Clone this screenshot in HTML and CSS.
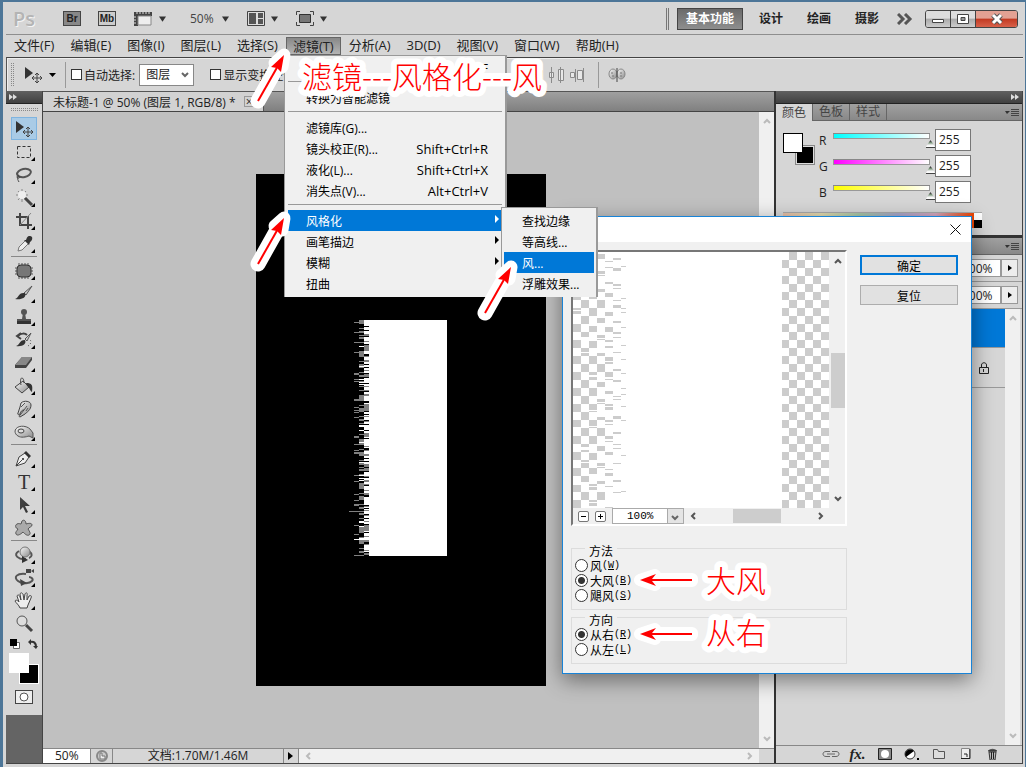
FILE: index.html
```html
<!DOCTYPE html>
<html lang="zh-CN">
<head>
    <meta charset="UTF-8">
    <meta name="viewport" content="width=device-width, initial-scale=1.0">
    <title>Photoshop</title>
    <link rel="stylesheet" href="styles.css">
</head>
<body>
    <svg class="defs" width="0" height="0">
        <defs>
            <linearGradient id="metal" x1="0" y1="0" x2="1" y2="1">
                <stop offset="0" stop-color="#fafafa"/>
                <stop offset="1" stop-color="#8a8a8a"/>
            </linearGradient>
            <linearGradient id="dark" x1="0" y1="0" x2="1" y2="1">
                <stop offset="0" stop-color="#444"/>
                <stop offset="1" stop-color="#333"/>
            </linearGradient>
            <pattern id="checker" width="16" height="16" patternUnits="userSpaceOnUse">
                <path fill="#fff" d="M0 0h16v16H0z"/>
                <path fill="#ccc" d="M8 0h8v8H8zM0 8h8v8H0z"/>
            </pattern>
        </defs>
        <symbol id="down" viewBox="0 0 8 6"><path d="M0 0h8L4 6z"/></symbol>
        <symbol id="chev-up" viewBox="0 0 8 6"><path d="M1 5l3-3 3 3" fill="none" stroke="currentColor" stroke-width="2"/></symbol>
        <symbol id="chev-down" viewBox="0 0 8 6"><path d="M1 1l3 3 3-3" fill="none" stroke="currentColor" stroke-width="2"/></symbol>
        <symbol id="chev-left" viewBox="0 0 6 8"><path d="M5 1L2 4l3 3" fill="none" stroke="currentColor" stroke-width="2"/></symbol>
        <symbol id="chev-right" viewBox="0 0 6 8"><path d="M1 1l3 3-3 3" fill="none" stroke="currentColor" stroke-width="2"/></symbol>
        <symbol id="collapse" viewBox="0 0 8 6"><path d="M0 0l4 3-4 3zM4 0l4 3-4 3z" fill="#ddd"/></symbol>
        <symbol id="panel-menu" viewBox="0 0 14 9"><path d="M0 3h5L2 6z" fill="#333"/><path d="M6 1h8M6 3h8M6 5h8M6 7h8" stroke="#444" transform="translate(0 .5)"/></symbol>
        <symbol id="move" viewBox="0 0 20 18"><path d="M2 1v12l8-6z" fill="#333"/><path d="M14 7v10M9 12h10M12 9l2-2 2 2M12 15l2 2 2-2M11 10l-2 2 2 2M17 10l2 2-2 2" fill="none" stroke="#444"/></symbol>
        <symbol id="arrow-diag" viewBox="0 0 44 64" overflow="visible">
            <g fill="none" stroke="#fff" stroke-width="15" stroke-linejoin="round" stroke-linecap="round">
                <path d="M9 55L32 14"/><path d="M35 9l-2 12-7-4z" fill="#fff" stroke-width="13"/>
            </g>
            <path d="M9 55L30 18" stroke="red" stroke-width="2"/>
            <path d="M35 9l-3 17-4-4-6-1z" fill="red"/>
        </symbol>
        <symbol id="arrow-left" viewBox="0 0 66 28">
            <path d="M6 14l15-5-2 4h39v2H19l2 4z" fill="#fff" stroke="#fff" stroke-width="12" stroke-linejoin="round"/>
            <path d="M6 14l16-6-4 5h40v2H18l4 5z" fill="red"/>
        </symbol>
    </svg>

    <div class="window">
        <header class="app-bar">
            <span class="logo">Ps</span>
            <button class="app-badge bridge">Br</button>
            <button class="app-badge mini">Mb</button>
            <button class="app-tool">
                <svg width="20" height="16" viewBox="0 0 20 16"><path d="M1 1h18v4H5v10H1z" fill="#444"/><path d="M5 5h13v9H5z" fill="#eee" stroke="#888"/><path d="M4 1v2M7 1v2M10 1v2M13 1v2M16 1v2M1 6h2M1 9h2M1 12h2" stroke="#ddd"/></svg>
                <svg class="caret" width="7" height="6"><use href="#down"/></svg>
            </button>
            <button class="app-tool zoom">50%<svg class="caret" width="7" height="6"><use href="#down"/></svg></button>
            <button class="app-tool">
                <svg width="18" height="15" viewBox="0 0 18 15"><path d="M.5.5h17v14H.5z" fill="#ddd" stroke="#444"/><path d="M2 2h7v11H2zM11 2h5v5h-5zM11 8h5v5h-5z" fill="#555"/></svg>
                <svg class="caret" width="7" height="6"><use href="#down"/></svg>
            </button>
            <button class="app-tool">
                <svg width="18" height="15" viewBox="0 0 18 15"><path d="M.5 4V.5H4M14 .5h3.500V4M17.500 11v3.500H14M4 14.500H.5V11" fill="none" stroke="#444"/><path d="M3.500 3.500h11v8h-11z" fill="#777" stroke="#333"/></svg>
                <svg class="caret" width="7" height="6"><use href="#down"/></svg>
            </button>
            <div class="workspaces">
                <button class="workspace active">基本功能</button>
                <button class="workspace">设计</button>
                <button class="workspace">绘画</button>
                <button class="workspace">摄影</button>
                <svg width="16" height="12" viewBox="0 0 16 12"><path d="M1 1l5 5-5 5M8 1l5 5-5 5" fill="none" stroke="#555" stroke-width="3"/></svg>
            </div>
            <div class="window-buttons">
                <button aria-label="最小化"><svg width="12" height="10" viewBox="0 0 12 10"><path d="M.5 5.500h11v3H.5z" fill="#fff" stroke="#444"/></svg></button>
                <button aria-label="还原"><svg width="12" height="10" viewBox="0 0 12 10"><path d="M.5.5h11v9H.5z" fill="#fff" stroke="#444"/><path d="M4 3.500h4v3H4z" fill="#999" stroke="#444"/></svg></button>
                <button class="close" aria-label="关闭"><svg width="14" height="12" viewBox="0 0 14 12"><path d="M3 2l8 8M11 2l-8 8" stroke="#555" stroke-width="5"/><path d="M3 2l8 8M11 2l-8 8" stroke="#fff" stroke-width="3"/></svg></button>
            </div>
        </header>

        <nav class="menu-bar">
            <button>文件(F)</button>
            <button>编辑(E)</button>
            <button>图像(I)</button>
            <button>图层(L)</button>
            <button>选择(S)</button>
            <button class="open">滤镜(T)</button>
            <button>分析(A)</button>
            <button>3D(D)</button>
            <button>视图(V)</button>
            <button>窗口(W)</button>
            <button>帮助(H)</button>
        </nav>

        <div class="options-bar">
            <span class="grip-v"></span>
            <svg class="move-icon" width="20" height="18"><use href="#move"/></svg>
            <svg width="7" height="4" viewBox="0 0 8 6" preserveAspectRatio="none"><path d="M0 0h8L4 6z"/></svg>
            <span class="divider"></span>
            <label class="check"><input type="checkbox">自动选择:</label>
            <span class="select-wrap">
                <select aria-label="自动选择"><option>图层</option></select>
                <svg width="8" height="6"><use href="#chev-down"/></svg>
            </span>
            <label class="check transform"><input type="checkbox">显示变换控件</label>
            <div class="align-icons">
                <svg width="16" height="16" viewBox="0 0 16 16" fill="#e8e8e8" stroke="#8a8a8a"><path d="M3.500 5.500h3v5h-3zM10.500 3.500h3v9h-3zM7.500 0v16"/></svg>
                <svg width="16" height="16" viewBox="0 0 16 16" fill="#e8e8e8" stroke="#8a8a8a"><path d="M2.500 0v16M11.500 0v16M.5 5.500h4v5h-4zM9.500 2.500h5v11h-5z"/></svg>
                <svg width="16" height="16" viewBox="0 0 16 16" fill="#e8e8e8" stroke="#8a8a8a"><path d="M1.500 5.500h4v5h-4zM6.500 2v13M8.500 3.500h5v9h-5zM14.500 1v14"/></svg>
                <span class="divider"></span>
                <svg width="18" height="16" viewBox="0 0 18 16"><ellipse cx="5" cy="7" rx="4" ry="5" fill="url(#metal)" stroke="#888"/><ellipse cx="13" cy="7" rx="4" ry="5" fill="url(#metal)" stroke="#888"/><path d="M3 6h2M4 9h2M12 6h2M12 9h2" stroke="#777"/><path d="M9 1v14" stroke="#444"/></svg>
            </div>
        </div>

        <main class="workspace-area">
            <aside class="toolbox">
                <div class="dock-head"><svg width="8" height="6"><use href="#collapse"/></svg></div>
                <div class="grip-h"></div>
                <div class="tools">
                    <button class="tool selected" aria-label="移动"><svg viewBox="0 0 20 18"><use href="#move"/></svg></button>
                    <button class="tool more" aria-label="选框"><svg viewBox="0 0 20 18"><path d="M3.500 3.500h13v11h-13z" fill="none" stroke="#333" stroke-dasharray="3 2"/></svg></button>
                    <button class="tool more" aria-label="套索"><svg viewBox="0 0 20 18"><ellipse cx="10" cy="7" rx="7" ry="4" transform="rotate(-12 10 7)" fill="none" stroke="#555" stroke-width="2"/><path d="M5 9c-3 1-2 4 0 3s0-3-1-1 0 3 1 5" fill="none" stroke="#444"/></svg></button>
                    <button class="tool more" aria-label="魔棒"><svg viewBox="0 0 20 18"><path d="M8 0v13M2 6h12M4 2l8 9M12 2l-8 9" stroke="#888"/><circle cx="8" cy="6" r="4" fill="#eee"/><path d="M11 9l7 7" stroke="#444" stroke-width="3"/></svg></button>
                    <button class="tool more" aria-label="裁剪"><svg viewBox="0 0 20 18"><path d="M6 1v12h12M2 5h12v12" fill="none" stroke="#444" stroke-width="2"/><path d="M6 13L17 1" stroke="#888"/></svg></button>
                    <button class="tool more" aria-label="吸管"><svg viewBox="0 0 20 18"><path d="M4 16l1-4 7-7 3 3-7 7z" fill="#eee" stroke="#777"/><path d="M10 5l5 5 1-3c3-2 3-6 0-6s-3 2-4 4z" fill="#333"/></svg></button>
                    <hr>
                    <button class="tool more" aria-label="修复"><svg viewBox="0 0 20 18"><path d="M5 1v16M8 1v16M11 1v16M14 1v16M1 6h18M1 9h18M1 12h18" stroke="#555"/><rect x="3" y="3" width="14" height="12" rx="4" fill="#777" stroke="#333"/></svg></button>
                    <button class="tool more" aria-label="画笔"><svg viewBox="0 0 20 18"><path d="M18 1l-8 7 2 2z" fill="#ccc" stroke="#555"/><path d="M11 8c2 5-4 7-10 6 4-1 3-7 10-6z" fill="#333"/></svg></button>
                    <button class="tool more" aria-label="图章"><svg viewBox="0 0 20 18"><circle cx="10" cy="4" r="3" fill="#555"/><path d="M9 5h2l1 6h5v4H3v-4h5z" fill="#555"/><path d="M3 13h14v3H3z" fill="#333"/></svg></button>
                    <button class="tool more" aria-label="历史画笔"><svg viewBox="0 0 20 18"><path d="M17 2l-6 6 2 2z" fill="#ccc" stroke="#555"/><path d="M11 9c2 4-3 7-9 6 4-1 3-6 9-6z" fill="#333"/><path d="M4 5c3-3 7-3 9-1M7 2L3 5l4 3" fill="none" stroke="#444" stroke-width="2"/><path d="M14 15c3-2 4-5 2-6" fill="none" stroke="#555" stroke-dasharray="1 2"/></svg></button>
                    <button class="tool more" aria-label="橡皮擦"><svg viewBox="0 0 20 18"><path d="M8 3h10v3l-6 8H1v-3z" fill="#444"/><path d="M8 3h10l-6 8H1z" fill="#888"/></svg></button>
                    <button class="tool more" aria-label="油漆桶"><svg viewBox="0 0 20 18"><path d="M1 10l8-6 6 6-7 6z" fill="url(#metal)" stroke="#444"/><path d="M7 8c-2-9 3-9 3-2" fill="none" stroke="#444"/><path d="M12 6c6 0 7 2 6 9-2-1-2-4-5-6z" fill="#333"/></svg></button>
                    <button class="tool more" aria-label="涂抹"><svg viewBox="0 0 20 18"><path d="M7 3c3-3 10-2 10 2 0 5-4 7-6 9l-5 3c-1 0-1-1 0-2l4-5c-2 0-3 1-4 4-1 1-3 1-2-1l2-6z" fill="url(#metal)" stroke="#444"/><path d="M7 7l4-4M10 10l3-4M12 11l2-3" stroke="#555"/></svg></button>
                    <button class="tool more" aria-label="海绵"><svg viewBox="0 0 20 18"><path d="M1 8c1-6 11-6 15-2l3 4v5l-4-2c-3 1-8 2-11 0-2-1-3-3-3-5z" fill="url(#metal)" stroke="#555"/><ellipse cx="7" cy="8" rx="3" ry="2" fill="#ddd" stroke="#444"/></svg></button>
                    <hr>
                    <button class="tool more" aria-label="钢笔"><svg viewBox="0 0 20 18"><path d="M2 16L5 7l6-4 4 4-4 6z" fill="#eee" stroke="#444"/><path d="M2 16l6-6" stroke="#444"/><circle cx="9" cy="9" r="1" fill="#222"/><path d="M12 1l5 5-2 2-5-5z" fill="#333"/></svg></button>
                    <button class="tool more type" aria-label="文字">T</button>
                    <button class="tool more" aria-label="路径选择"><svg viewBox="0 0 20 18"><path d="M6 1v13l3-3 3 6 2-1-3-6h5z" fill="url(#dark)"/></svg></button>
                    <button class="tool more" aria-label="形状"><svg viewBox="0 0 20 18"><path d="M8 2c2-2 4 0 4 3 3-1 6-1 6 1s-3 2-4 4c2 3 3 5 1 6s-4-1-6-3c-3 3-6 4-7 2s1-3 2-5C1 9 1 6 3 5s3 0 4 0z" fill="#aaa" stroke="#555"/></svg></button>
                    <hr>
                    <button class="tool more" aria-label="3D 旋转"><svg viewBox="0 0 20 18"><path d="M5 5C-2 9 5 14 12 13M15 5c4 3 3 6 0 7" fill="none" stroke="#555" stroke-width="2"/><circle cx="11" cy="6" r="5" fill="url(#metal)" stroke="#777"/><path d="M8 10l6 4-6 3z" fill="#333"/></svg></button>
                    <button class="tool more" aria-label="3D 相机"><svg viewBox="0 0 20 18"><path d="M12 5C3 4-1 8 4 12s12 2 14 0-1-4-3-4" fill="none" stroke="#555" stroke-width="2"/><path d="M12 0h5v4h-5zM17 2l3-2v4zM6 10l7 4-6 3z" fill="#444"/></svg></button>
                    <button class="tool more" aria-label="抓手"><svg viewBox="0 0 20 18"><path d="M6 16c-1-3-4-5-5-7 1-2 3 0 4 1L3 4c1-2 2-1 3 1l1 3-1-6c1-2 2-1 3 0l1 6 1-6c1-2 3-1 2 1v5l2-4c2-1 3 0 2 2l-3 7-1 3z" fill="#eee" stroke="#444"/></svg></button>
                    <button class="tool" aria-label="缩放"><svg viewBox="0 0 20 18"><circle cx="8" cy="6" r="5" fill="#ddd" stroke="#555"/><path d="M12 10l6 6" stroke="#444" stroke-width="3"/></svg></button>
                </div>
                <div class="swatch-tools">
                    <svg width="10" height="10" viewBox="0 0 10 10"><path d="M3.500 3.500h6v6h-6z" fill="#fff" stroke="#666"/><path d="M0 0h7v7H0z"/></svg>
                    <svg width="10" height="10" viewBox="0 0 10 10"><path d="M2 3c4-1 6 1 6 5" fill="none" stroke="#333" stroke-width="2"/><path d="M3 0v6L0 3zM5 7h5l-2 3z" fill="#333"/></svg>
                </div>
                <div class="swatches"><span class="back"></span><span class="front"></span></div>
                <button class="quick-mask" aria-label="快速蒙版"><svg width="16" height="12" viewBox="0 0 16 12"><circle cx="8" cy="6" r="4" fill="#fff" stroke="#555"/></svg></button>
            </aside>

            <section class="document">
                <div class="doc-tabs">
                    <div class="doc-tab">未标题-1 @ 50% (图层 1, RGB/8) * <button aria-label="关闭文档">×</button></div>
                </div>
                <div class="doc-body">
                    <div class="canvas">
                        <svg class="artboard" width="290" height="512" viewBox="0 0 290 512">
                            <path d="M0 0h290v512H0z"/>
                            <path d="M113 146h78v236h-78z" fill="#fff"/>
                            <g stroke-width="5">
                                <path d="M110.500 146v236" stroke="#fff"/>
                                <path d="M110.500 146v236" stroke="#808080" stroke-dasharray="0 6 1 3 1 3 2 5 1 2 7 5 1 3 2 2 1 5 1 2 4 3"/>
                                <path d="M110.500 152v230" stroke="#000" stroke-dasharray="1 3 1 5 1 7 1 9 2 8 1 2 1 5"/>
                                <path d="M105.500 146v236" stroke="#808080" stroke-dasharray="4 4 1 2 2 2 1 1 2 3 1 3 1 4 6 4 1 2"/>
                                <path d="M105.500 172v205" stroke="#fff" stroke-dasharray="1 19 1 12 1 2 1 1 1 40 2 3 1 11"/>
                            </g>
                            <path fill="#808080" d="M98 148h5v1h-5zM98 158h5v1h-5zM98 168h5v1h-5zM98 178h5v1h-5zM98 199h5v2h-5zM98 205h5v1h-5zM98 207h5v1h-5zM98 225h5v2h-5zM98 233h5v1h-5zM98 236h5v1h-5zM98 238h5v1h-5zM98 243h5v1h-5zM98 262h5v2h-5zM98 270h5v1h-5zM98 276h5v1h-5zM98 278h5v2h-5zM98 301h5v1h-5zM98 307h5v1h-5zM98 320h5v1h-5zM98 326h5v1h-5zM98 330h5v2h-5zM93 337h10v1H93zM98 351h5v1h-5zM98 360h5v1h-5zM98 381h5v1h-5z"/>
                            <path fill="#fff" d="M98 365h10v1H98z"/>
                        </svg>
                    </div>
                    <div class="scroll-v">
                        <svg width="8" height="6"><use href="#chev-up"/></svg>
                        <svg width="8" height="6"><use href="#chev-down"/></svg>
                    </div>
                </div>
                <div class="status-bar">
                    <input class="zoom-field" aria-label="缩放" value="50%">
                    <span class="status-icon"><svg width="14" height="14" viewBox="0 0 14 14"><circle cx="7" cy="7" r="5" fill="#ccc" stroke="#888" stroke-width="2"/><path d="M5 4v6h5V7H7V4z" fill="#eee" stroke="#777"/></svg></span>
                    <span class="status-text">文档:1.70M/1.46M</span>
                    <span class="status-more"><svg width="5" height="8" viewBox="0 0 5 8"><path d="M0 0l5 4-5 4z"/></svg></span>
                    <div class="scroll-h">
                        <svg width="6" height="8"><use href="#chev-left"/></svg>
                        <svg width="6" height="8"><use href="#chev-right"/></svg>
                    </div>
                    <span class="corner"></span>
                </div>
            </section>

            <aside class="dock">
                <div class="dock-head right"><svg width="8" height="6"><use href="#collapse"/></svg></div>
                <div class="panel-tabs">
                    <button class="active">颜色</button>
                    <button>色板</button>
                    <button>样式</button>
                    <svg width="14" height="9"><use href="#panel-menu"/></svg>
                </div>
                <div class="color-panel">
                    <div class="color-swatches"><span class="back"></span><span class="front"></span></div>
                    <div class="channels">
                        <div class="channel">
                            <label for="red">R</label>
                            <input class="slider cyan" id="red" type="range" min="0" max="255" value="255">
                            <input class="value" aria-label="R" value="255">
                        </div>
                        <div class="channel">
                            <label for="green">G</label>
                            <input class="slider magenta" id="green" type="range" min="0" max="255" value="255">
                            <input class="value" aria-label="G" value="255">
                        </div>
                        <div class="channel">
                            <label for="blue">B</label>
                            <input class="slider yellow" id="blue" type="range" min="0" max="255" value="255">
                            <input class="value" aria-label="B" value="255">
                        </div>
                    </div>
                    <div class="spectrum"><span></span></div>
                </div>
                <div class="panel-tabs layers-tabs">
                    <svg width="14" height="9"><use href="#panel-menu"/></svg>
                </div>
                <div class="layer-option"><input aria-label="不透明度" value="100%"><button aria-label="不透明度滑块"><svg width="4" height="6" viewBox="0 0 4 6"><path d="M0 0l4 3-4 3z"/></svg></button></div>
                <div class="layer-option"><input aria-label="填充" value="100%"><button aria-label="填充滑块"><svg width="4" height="6" viewBox="0 0 4 6"><path d="M0 0l4 3-4 3z"/></svg></button></div>
                <div class="layers">
                    <div class="layer-list">
                        <div class="layer current"></div>
                        <div class="layer"><svg width="10" height="12" viewBox="0 0 10 12"><path d="M2.500 5V3c0-3 5-3 5 0v2M.5 5.500h9v6h-9z" fill="none" stroke="#222"/><path d="M4.500 7v3" stroke="#222"/></svg></div>
                    </div>
                    <div class="scroll-v">
                        <svg width="8" height="6"><use href="#chev-up"/></svg>
                        <svg width="8" height="6"><use href="#chev-down"/></svg>
                    </div>
                </div>
                <div class="layer-actions">
                    <button aria-label="链接图层"><svg width="18" height="8" viewBox="0 0 18 8"><path d="M8 1.500H4c-4 0-4 5 0 5h4M10 1.500h4c4 0 4 5 0 5h-4M5 4h8" fill="none" stroke="#666"/></svg></button>
                    <button class="fx" aria-label="图层样式">fx.</button>
                    <button aria-label="添加蒙版"><svg width="14" height="12" viewBox="0 0 14 12"><path d="M.5.5h13v11H.5z" fill="#888" stroke="#222"/><circle cx="7" cy="6" r="4" fill="#fff"/></svg></button>
                    <button aria-label="调整图层"><svg width="16" height="12" viewBox="0 0 16 12"><circle cx="6" cy="6" r="5" fill="#fff" stroke="#333"/><path d="M2 9c-3-5 3-10 8-6z"/><path d="M13 10h2v2h-2z"/></svg></button>
                    <button aria-label="新建组"><svg width="12" height="11" viewBox="0 0 12 11"><path d="M.5 1.500h4l1 2h6v7H.5z" fill="#ddd" stroke="#555"/></svg></button>
                    <button aria-label="新建图层"><svg width="11" height="11" viewBox="0 0 11 11"><path d="M1.500.5h8v10h-8z" fill="#eee" stroke="#888"/><path d="M10 1v9.500H1M4 6h3v3" fill="none" stroke="#222"/></svg></button>
                    <button aria-label="删除图层"><svg width="11" height="12" viewBox="0 0 11 12"><path d="M1 3c2-3 7-3 9 0z" fill="#555"/><path d="M2 4h7l-1 8H3z" fill="#bbb" stroke="#333"/><path d="M4.500 4v7M6.500 4v7M1 3h9" stroke="#222"/></svg></button>
                </div>
            </aside>
        </main>
    </div>

    <div class="dialog" role="dialog" aria-label="风">
        <div class="dialog-title"><button aria-label="关闭"><svg width="11" height="11" viewBox="0 0 11 11"><path d="M.5.5l10 10M10.500.5l-10 10" stroke="#111"/></svg></button></div>
        <div class="dialog-body">
            <div class="dialog-main">
                <div class="preview">
                    <svg width="256" height="256" viewBox="0 0 256 256">
                        <path d="M0 0h256v256H0z" fill="url(#checker)"/>
                        <path d="M53 0h156v256H53z" fill="#fff"/>
                        <g stroke="#fff">
                            <path d="M4 44v212" stroke-width="8" stroke-dasharray="0 14 1 3 2 16 1 34 1 45"/>
                            <path d="M12 40v216" stroke-width="8" stroke-dasharray="0 18 2 2 1 22 3 12 1 19 2 1 1 26"/>
                            <path d="M20 10v246" stroke-width="8" stroke-dasharray="3 9 1 3 2 14 1 4 2 21 4 8 1 3"/>
                            <path d="M28 0v256" stroke-width="8" stroke-dasharray="2 5 1 7 4 3 1 8 6 3 1 4 2 9 3 5"/>
                            <path d="M36 0v256" stroke-width="8" stroke-dasharray="4 3 2 1 5 4 1 3 7 5 2 1 3 4"/>
                            <path d="M44 0v256" stroke-width="8" stroke-dasharray="6 2 3 1 4 3 7 1 5 2 2 1"/>
                            <path d="M50.500 0v256" stroke-width="5" stroke-dasharray="14 1 5 1 11 1 13 1 9 1 3 1"/>
                        </g>
                    </svg>
                    <div class="scroll-v preview-scroll">
                        <svg width="8" height="6"><use href="#chev-up"/></svg>
                        <span class="thumb"></span>
                        <svg width="8" height="6"><use href="#chev-down"/></svg>
                    </div>
                    <div class="preview-bar">
                        <button class="zoom-btn" aria-label="缩小"><svg width="5" height="5"><path d="M0 2.500h5" stroke="#000"/></svg></button>
                        <button class="zoom-btn" aria-label="放大"><svg width="5" height="5"><path d="M0 2.500h5M2.500 0v5" stroke="#000"/></svg></button>
                        <span class="preview-zoom">
                            <select aria-label="预览比例"><option>100%</option></select>
                            <svg width="8" height="6"><use href="#chev-down"/></svg>
                        </span>
                        <div class="scroll-h preview-scroll">
                            <svg width="6" height="8"><use href="#chev-left"/></svg>
                            <span class="thumb"></span>
                            <svg width="6" height="8"><use href="#chev-right"/></svg>
                        </div>
                    </div>
                </div>
                <fieldset class="method">
                    <legend>方法</legend>
                    <label><input type="radio" name="method">风<span>(<u>W</u>)</span></label>
                    <label><input type="radio" name="method" checked>大风<span>(<u>B</u>)</span></label>
                    <label><input type="radio" name="method">飓风<span>(<u>S</u>)</span></label>
                </fieldset>
                <fieldset>
                    <legend>方向</legend>
                    <label><input type="radio" name="direction" checked>从右<span>(<u>R</u>)</span></label>
                    <label><input type="radio" name="direction">从左<span>(<u>L</u>)</span></label>
                </fieldset>
            </div>
            <div class="dialog-buttons">
                <button class="primary">确定</button>
                <button>复位</button>
            </div>
        </div>
    </div>

    <ul class="menu filter-menu">
        <li><kbd>Ctrl+F</kbd></li>
        <li class="line"></li>
        <li>转换为智能滤镜</li>
        <li class="line"></li>
        <li>滤镜库(G)...</li>
        <li>镜头校正(R)...<kbd>Shift+Ctrl+R</kbd></li>
        <li>液化(L)...<kbd>Shift+Ctrl+X</kbd></li>
        <li>消失点(V)...<kbd>Alt+Ctrl+V</kbd></li>
        <li class="line"></li>
        <li class="current sub">风格化</li>
        <li class="sub">画笔描边</li>
        <li class="sub">模糊</li>
        <li>扭曲</li>
    </ul>
    <ul class="menu stylize-menu">
        <li>查找边缘</li>
        <li>等高线...</li>
        <li class="current">风...</li>
        <li>浮雕效果...</li>
    </ul>

    <svg class="note note-path" width="244" height="36"><text x="0" y="29">滤镜---风格化---风</text></svg>
    <svg class="note note-method" width="60" height="36"><text x="0" y="29">大风</text></svg>
    <svg class="note note-direction" width="60" height="36"><text x="0" y="29">从右</text></svg>
    <svg class="note-arrow to-filter" width="44" height="64"><use href="#arrow-diag"/></svg>
    <svg class="note-arrow to-stylize" width="44" height="64"><use href="#arrow-diag"/></svg>
    <svg class="note-arrow to-wind" width="44" height="64"><use href="#arrow-diag"/></svg>
    <svg class="note-arrow to-method" width="66" height="28"><use href="#arrow-left"/></svg>
    <svg class="note-arrow to-direction" width="66" height="28"><use href="#arrow-left"/></svg>
</body>
</html>
```
FILE: styles.css
```css
* {
    box-sizing: border-box;
    margin: 0;
    padding: 0;
}

body {
    position: relative;
    height: 100vh;
    overflow: hidden;
    font-family: "Open Sans", "Noto Sans CJK SC", sans-serif;
    font-size: 12px;
    color: #222;
}

button, input, select {
    font: inherit;
    color: inherit;
    border: none;
    background: none;
    border-radius: 0;
    appearance: none;
    outline: none;
}

svg {
    display: block;
    flex: none;
}

.defs {
    position: absolute;
}

.window {
    height: 100vh;
    display: flex;
    flex-direction: column;
    background-color: #d6d6d6;
    border: solid #4d7698;
    border-width: 2px 1px 0 3px;
    padding: 1px 2px 3px 3px;
}

/* top bars */
.app-bar {
    display: flex;
    align-items: center;
    height: 32px;
    padding: 0 5px 0 7px;
    border-bottom: 1px solid #8e8e8e;
}

.logo {
    width: 50px;
    font-size: 20px;
    font-weight: 600;
    line-height: 28px;
    color: #b4b4b4;
    text-shadow: 1px 1px 0 #f4f4f4;
}

.app-badge {
    width: 18px;
    height: 15px;
    margin-right: 17px;
    font-family: "Liberation Sans", sans-serif;
    font-size: 10px;
    font-weight: bold;
    line-height: 13px;
    border: 1px solid #444;
}

.bridge {
    background-color: #888;
}

.mini {
    background-color: #ccc;
}

.app-tool {
    display: flex;
    align-items: center;
    margin-right: 18px;
}

.app-tool .caret {
    margin-left: 6px;
    fill: #333;
}

.zoom {
    margin-left: 6px;
    color: #444;
}

.zoom .caret {
    margin-left: 8px;
}

.workspaces {
    display: flex;
    align-items: center;
    margin-left: auto;
    padding-left: 8px;
    border-left: 3px double #777;
    height: 22px;
}

.workspace {
    height: 22px;
    margin-right: 12px;
    padding: 0 6px;
    font-weight: bold;
    line-height: 20px;
}

.workspace.active {
    width: 66px;
    margin-right: 10px;
    color: #fff;
    background: linear-gradient(#6a6a6a, #8e8e8e);
    border: 1px solid #444;
}

.window-buttons {
    display: flex;
    margin-left: 12px;
    border: 1px solid #444;
    border-radius: 3px;
    overflow: hidden;
}

.window-buttons button {
    display: flex;
    align-items: center;
    justify-content: center;
    width: 25px;
    height: 16px;
    background: linear-gradient(#ddd 45%, #aaa 50%, #ccc);
    border-right: 1px solid #444;
}

.window-buttons .close {
    width: 41px;
    border-right: none;
    background: linear-gradient(#e3a193 45%, #c23a22 50%, #d8614a);
}

.menu-bar {
    display: flex;
    height: 22px;
}

.menu-bar button {
    height: 20px;
    padding: 0 8px;
    font-size: 13px;
    line-height: 20px;
    white-space: nowrap;
}

.menu-bar .open {
    height: 18px;
    padding: 0 6px;
    margin-top: 2px;
    line-height: 14px;
    background: linear-gradient(#888, #b4b4b4);
    border: 1px solid #666;
}

.options-bar {
    display: flex;
    align-items: center;
    height: 34px;
    padding-left: 4px;
    border-top: 1px solid #444;
    border-left: 1px solid #555;
    box-shadow: inset 1px 1px 0 #eee;
}

/* dotted handles */
.grip-v, .grip-h {
    background:
        repeating-linear-gradient(to bottom, transparent 0 1px, #d6d6d6 1px 2px),
        repeating-linear-gradient(to right, #888 0 1px, #d6d6d6 1px 2px);
}

.grip-v {
    width: 4px;
    height: 24px;
    margin-right: 8px;
}

.grip-h {
    width: 27px;
    height: 4px;
    margin: 4px 0 5px;
}

.move-icon {
    margin-right: 6px;
}

.divider {
    width: 1px;
    height: 26px;
    margin: 0 5px 0 9px;
    background-color: #999;
}

.check {
    display: flex;
    align-items: center;
    gap: 2px;
    white-space: nowrap;
}

.check input {
    width: 11px;
    height: 11px;
    background-color: #fff;
    border: 1px solid #333;
}

.transform {
    margin-left: 16px;
}

.select-wrap {
    position: relative;
    margin-left: 4px;
}

.select-wrap select {
    width: 55px;
    height: 22px;
    padding-left: 6px;
    background-color: #fff;
    border: 1px solid #888;
}

.select-wrap svg {
    position: absolute;
    right: 5px;
    top: 8px;
    color: #666;
}

.align-icons {
    display: flex;
    align-items: center;
    gap: 4px;
    margin-left: 234px;
}

/* workspace */
.workspace-area {
    flex: 1;
    display: flex;
    min-height: 0;
    border: solid #444;
    border-width: 0 1px 1px 0;
}

.dock-head {
    display: flex;
    align-items: center;
    height: 13px;
    padding: 0 3px;
    background: linear-gradient(#606060, #404040);
    border-bottom: 1px solid #222;
}

.dock-head.right {
    justify-content: flex-end;
}

.toolbox {
    width: 37px;
    display: flex;
    flex-direction: column;
    align-items: center;
    background: linear-gradient(#d6d6d6 624px, #646464 624px);
    border-right: 1px solid #444;
}

.toolbox .dock-head {
    align-self: stretch;
}

.tool {
    position: relative;
    display: block;
    width: 26px;
    height: 23px;
}

.tool svg {
    width: 20px;
    height: 18px;
    margin: 0 auto;
}

.tool.selected {
    background-color: #a9cbe6;
    border: 1px solid #7fb4e0;
}

.tool.more::after {
    content: "";
    position: absolute;
    right: 2px;
    bottom: 2px;
    border: 2px solid;
    border-color: transparent #000 #000 transparent;
}

.tool.type {
    font-family: "Liberation Serif", serif;
    font-size: 20px;
    line-height: 20px;
    color: #333;
}

.tools hr {
    height: 4px;
    border: solid #d6d6d6;
    border-width: 1px 0 2px;
    background-color: #888;
}

.swatch-tools {
    display: flex;
    justify-content: space-between;
    width: 28px;
    margin: 4px 0;
}

.swatches {
    position: relative;
    width: 30px;
    height: 31px;
}

.swatches span {
    position: absolute;
    width: 20px;
    height: 20px;
    border: 1px solid #fff;
}

.front {
    left: 0;
    top: 0;
    background-color: #fff;
}

.back {
    right: 0;
    bottom: 0;
    background-color: #000;
}

.quick-mask {
    margin-top: 6px;
    background-color: #eee;
    border: 1px solid #444;
}

.document {
    flex: 1;
    display: flex;
    flex-direction: column;
    min-width: 0;
}

.doc-tabs {
    display: flex;
    height: 21px;
    background: linear-gradient(#a0a0a0, #808080);
    border-top: 1px solid #555;
    border-bottom: 1px solid #444;
}

.doc-tab {
    display: flex;
    align-items: center;
    gap: 8px;
    width: 221px;
    padding-left: 10px;
    background-color: #d2d2d2;
    border-right: 1px solid #555;
    white-space: nowrap;
}

.doc-tab button {
    width: 11px;
    height: 11px;
    line-height: 9px;
    border: 1px solid #999;
}

.doc-body {
    flex: 1;
    display: flex;
    min-height: 0;
}

.canvas {
    flex: 1;
    display: flex;
    align-items: center;
    justify-content: center;
    background-color: #c0c0c0;
}

.scroll-v {
    display: flex;
    flex-direction: column;
    align-items: center;
    justify-content: space-between;
    width: 15px;
    padding: 6px 0;
    background-color: #f0f0f0;
    color: #bbb;
}

.scroll-h {
    flex: 1;
    display: flex;
    align-items: center;
    justify-content: space-between;
    padding: 0 6px;
    background-color: #f0f0f0;
    color: #bbb;
}

.status-bar {
    display: flex;
    height: 15px;
    border-top: 1px solid #888;
    line-height: 14px;
}

.zoom-field {
    width: 48px;
    padding-left: 12px;
    background-color: #fff;
    border-right: 1px solid #888;
}

.status-icon {
    width: 22px;
    padding-left: 4px;
    border-right: 1px solid #888;
}

.status-text {
    width: 171px;
    text-align: center;
    border-right: 1px solid #888;
}

.status-more {
    width: 15px;
    padding: 3px 0 0 4px;
    border-right: 1px solid #888;
}

.corner {
    width: 15px;
}

/* right panels */
.dock {
    width: 248px;
    display: flex;
    flex-direction: column;
    border-left: 2px solid #333;
}

.panel-tabs {
    display: flex;
    height: 17px;
    background: linear-gradient(#a0a0a0, #888);
    border-bottom: 1px solid #666;
}

.panel-tabs button {
    width: 37px;
    line-height: 16px;
    color: #444;
    border-right: 1px solid #666;
}

.panel-tabs .active {
    height: 17px;
    background-color: #d6d6d6;
}

.panel-tabs svg {
    margin: 4px 3px 0 auto;
}

.color-panel {
    height: 114px;
    display: flex;
    flex-wrap: wrap;
    align-content: flex-start;
    padding: 8px 0 0 7px;
}

.color-swatches {
    position: relative;
    width: 32px;
    height: 32px;
    margin: 4px 4px 0 0;
}

.color-swatches span {
    position: absolute;
    width: 20px;
    height: 20px;
    border: 1px solid #000;
}

.color-swatches .back {
    border: 1px solid #888;
    outline: 1px solid #ddd;
    outline-offset: -2px;
}

.channel {
    display: flex;
    align-items: center;
    height: 22px;
    margin-bottom: 4px;
}

.channel label {
    width: 10px;
}

.value {
    width: 36px;
    height: 22px;
    padding: 0 3px 2px;
    background-color: #fff;
    border: 1px solid #777;
}

.slider {
    width: 106px;
    height: 16px;
    background-repeat: no-repeat;
    background-position: 4px 1px, 5px 2px, 4px 1px;
    background-size: 97px 1px, 95px 4px, 97px 6px;
}

.cyan {
    background-image: linear-gradient(#888, #888), linear-gradient(to right, #00ffff, #fff), linear-gradient(#999, #999);
}

.magenta {
    background-image: linear-gradient(#888, #888), linear-gradient(to right, #ff00ff, #fff), linear-gradient(#999, #999);
}

.yellow {
    background-image: linear-gradient(#888, #888), linear-gradient(to right, #ffff00, #fff), linear-gradient(#999, #999);
}

.slider::-webkit-slider-thumb {
    appearance: none;
    width: 9px;
    height: 8px;
    margin-top: 8px;
    background: linear-gradient(#4a4a4a 2px, #5a7a5a 2px, #f4f4f4 5px, #fff 7px, #444 7px);
    clip-path: polygon(50% 0, 100% 80%, 100% 100%, 0 100%, 0 80%);
}

.spectrum {
    width: 199px;
    height: 16px;
    margin-top: 5px;
    display: flex;
    justify-content: flex-end;
    background: linear-gradient(to right, #e8c0a8, #e4dcb0, #a8c8a8, #a8a8cc, #d8a8c0, #e40 96%);
    border-top: 1px solid #aaa;
}

.spectrum span {
    width: 8px;
    background: linear-gradient(#fff 50%, #000 50%);
}

.layers-tabs {
    height: 20px;
    border-top: 3px solid #333;
}

.layer-option {
    display: flex;
    justify-content: flex-end;
    align-items: center;
    height: 27px;
    padding-right: 4px;
    border-bottom: 1px solid #999;
}

.layer-option input {
    width: 40px;
    height: 18px;
    background-color: #fff;
    border: 1px solid #999;
}

.layer-option button {
    width: 17px;
    height: 18px;
    padding-left: 6px;
    background-color: #ededed;
    border: 1px solid #999;
}

.layers {
    flex: 1;
    display: flex;
}

.layer-list {
    flex: 1;
}

.layer {
    display: flex;
    align-items: center;
    justify-content: flex-end;
    height: 40px;
    padding-right: 16px;
    border-bottom: 1px solid #999;
}

.layer.current {
    height: 39px;
    background-color: #0078d7;
}

.layers .scroll-v {
    margin-right: 2px;
}

.layer-actions {
    display: flex;
    justify-content: flex-end;
    height: 18px;
    padding-right: 16px;
    border-top: 1px solid #888;
}

.layer-actions button {
    display: flex;
    align-items: center;
    justify-content: center;
    width: 27px;
    height: 15px;
}

.fx {
    font-family: "Liberation Serif", serif;
    font-size: 15px;
    font-style: italic;
    font-weight: bold;
    line-height: 14px;
}

/* wind dialog */
.dialog {
    position: absolute;
    left: 562px;
    top: 216px;
    width: 410px;
    height: 458px;
    background-color: #f0f0f0;
    border: 1px solid #1883d7;
    box-shadow: 0 6px 20px rgba(0, 0, 0, 0.45);
    font-family: "Noto Sans CJK SC", sans-serif;
    color: #000;
}

.dialog-title {
    display: flex;
    align-items: center;
    justify-content: flex-end;
    height: 25px;
    padding-right: 10px;
    background-color: #fff;
}

.dialog-body {
    display: flex;
    gap: 13px;
    padding: 8px;
}

.dialog-main {
    width: 276px;
}

.preview {
    display: grid;
    grid-template-columns: 257px 1fr;
    grid-template-rows: 256px 16px;
    height: 276px;
    border: 2px solid;
    border-color: #777 #fff #fff #777;
}

.preview .preview-scroll {
    color: #555;
}

.thumb {
    background-color: #cdcdcd;
}

.scroll-v .thumb {
    width: 14px;
    height: 55px;
}

.scroll-h .thumb {
    width: 48px;
    height: 14px;
}

.preview-bar {
    grid-column: 1 / 3;
    display: flex;
    align-items: center;
    padding: 0 15px 0 5px;
}

.zoom-btn {
    display: flex;
    align-items: center;
    justify-content: center;
    width: 11px;
    height: 11px;
    margin-right: 6px;
    background-color: #fff;
    border: 1px solid #777;
    border-radius: 2px;
}

.preview-zoom {
    position: relative;
    display: flex;
}

.preview-zoom select {
    width: 72px;
    height: 16px;
    padding-left: 14px;
    font-family: "Liberation Mono", monospace;
    font-size: 11px;
    background: linear-gradient(to right, #fff 54px, #aaa 54px, #aaa 55px, #e4e4e4 55px);
    border: 1px solid #aaa;
}

.preview-zoom svg {
    position: absolute;
    right: 5px;
    top: 7px;
    color: #666;
}

fieldset {
    padding: 0 3px 6px;
    border: 1px solid #dcdcdc;
}

.method {
    height: 69px;
    margin-top: 15px;
}

fieldset legend {
    height: 15px;
    margin: 0 0 2px 10px;
    padding: 0 4px;
    line-height: 19px;
}

fieldset label {
    display: flex;
    align-items: center;
    gap: 2px;
    height: 15px;
    white-space: nowrap;
}

fieldset input {
    width: 13px;
    height: 13px;
    background-color: #fff;
    border: 1px solid #333;
    border-radius: 50%;
}

fieldset input:checked {
    background: radial-gradient(circle, #333 3px, #fff 4px);
}

fieldset span {
    margin-left: -2px;
    font-family: "Liberation Mono", monospace;
    font-size: 10px;
}

.dialog-buttons {
    flex: 1;
    padding: 5px 5px 0 0;
}

.dialog-buttons button {
    display: block;
    width: 100%;
    height: 20px;
    margin-bottom: 10px;
    line-height: 20px;
    background-color: #e1e1e1;
    border: 1px solid #adadad;
}

.dialog-buttons .primary {
    line-height: 18px;
    border: 2px solid #0078d7;
}

/* drop-down menus */
.menu {
    position: absolute;
    list-style: none;
    background-color: #f0f0f0;
    border: solid #999;
    border-width: 1px 2px 0 1px;
    color: #000;
}

.menu li {
    display: flex;
    justify-content: space-between;
    align-items: center;
    height: 21px;
    padding: 0 14px 0 18px;
    white-space: nowrap;
}

.menu kbd {
    margin-left: auto;
    font-family: inherit;
    font-size: 13px;
}

.menu .line {
    height: 1px;
    margin: 3px 0 5px;
    background-color: #999;
}

.menu .current {
    background-color: #0078d7;
    color: #fff;
}

.menu .sub::after {
    content: "";
    margin: -4px -11px 0 0;
    border: 4px solid transparent;
    border-left-color: currentColor;
    border-right-width: 0;
}

.filter-menu {
    left: 284px;
    top: 55px;
    width: 223px;
    padding: 1px 3px 3px;
}

.stylize-menu {
    left: 501px;
    top: 207px;
    width: 97px;
    padding: 2px 2px 3px;
}

/* red notes over the screen */
.note {
    position: absolute;
    overflow: visible;
    font-family: "Noto Sans CJK SC", sans-serif;
    font-size: 30px;
    font-weight: 300;
    fill: #f00;
    stroke: #fff;
    stroke-width: 12px;
    stroke-linejoin: round;
    paint-order: stroke;
}

.note-path {
    left: 302px;
    top: 59px;
}

.note-method {
    left: 706px;
    top: 563px;
}

.note-direction {
    left: 706px;
    top: 615px;
}

.note-arrow {
    position: absolute;
    overflow: visible;
}

.to-filter {
    left: 249px;
    top: 46px;
}

.to-stylize {
    left: 249px;
    top: 209px;
}

.to-wind {
    left: 476px;
    top: 258px;
}

.to-method {
    left: 634px;
    top: 566px;
}

.to-direction {
    left: 634px;
    top: 620px;
}
```
